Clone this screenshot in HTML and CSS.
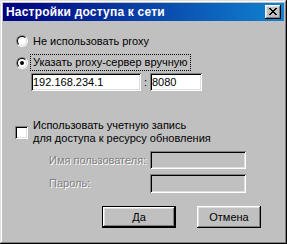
FILE: index.html
```html
<!DOCTYPE html>
<html lang="ru">
<head>
<meta charset="utf-8">
<title>Настройки доступа к сети</title>
<link rel="stylesheet" href="styles.css">
</head>
<body>
<div class="window">
  <div class="titlebar">
    <span class="title">Настройки доступа к сети</span>
    <button class="close" aria-label="Закрыть">
      <svg width="8" height="7" viewBox="0 0 8 7" shape-rendering="crispEdges">
        <path d="M0 0h2v1h-2zM6 0h2v1h-2zM1 1h2v1h-2zM5 1h2v1h-2zM2 2h4v1h-4zM3 3h2v1h-2zM2 4h4v1h-4zM1 5h2v1h-2zM5 5h2v1h-2zM0 6h2v1h-2zM6 6h2v1h-2z" fill="#000"/>
      </svg>
    </button>
  </div>
  <div class="content">
    <div class="row row-radio1">
      <span class="radio"></span>
      <span class="label">Не использовать proxy</span>
    </div>
    <div class="row row-radio2">
      <span class="radio checked"></span>
      <span class="label focus">Указать proxy-сервер вручную</span>
    </div>
    <div class="row row-addr">
      <div class="field field-ip">192.168.234.1</div>
      <span class="colon">:</span>
      <div class="field field-port">8080</div>
    </div>
    <div class="row row-check">
      <span class="checkbox"></span>
      <span class="label two-line">Использовать учетную запись<br>для доступа к ресурсу обновления</span>
    </div>
    <div class="row row-user">
      <span class="label disabled cred-label">Имя пользователя:</span>
      <div class="field field-cred"></div>
    </div>
    <div class="row row-pass">
      <span class="label disabled cred-label">Пароль:</span>
      <div class="field field-cred field-pass"></div>
    </div>
    <div class="row row-buttons">
      <button class="btn btn-default">Да</button>
      <button class="btn btn-cancel">Отмена</button>
    </div>
  </div>
</div>
</body>
</html>
```
FILE: styles.css
```css
html, body {
  margin: 0;
  padding: 0;
  background: #c0c0c0;
}

.window {
  width: 287px;
  height: 244px;
  box-sizing: border-box;
  padding: 3px;
  background: #c0c0c0;
  box-shadow: inset -1px -1px #000, inset 1px 1px #dfdfdf, inset -2px -2px #808080, inset 2px 2px #fff;
  font-family: "Liberation Sans", Arial, sans-serif;
  font-size: 11px;
  color: #000;
  display: flex;
  flex-direction: column;
}

.titlebar {
  height: 18px;
  flex: none;
  display: flex;
  align-items: center;
  justify-content: space-between;
  padding: 0 3px 0 3px;
  background: linear-gradient(to right, #000080, #1084d0);
}

.title {
  color: #fff;
  font-weight: bold;
  font-size: 12px;
  letter-spacing: 0.2px;
  line-height: 18px;
  white-space: nowrap;
}

.close {
  width: 16px;
  height: 14px;
  padding: 0;
  margin: 0;
  border: 0;
  background: #c0c0c0;
  box-shadow: inset -1px -1px #000, inset 1px 1px #fff, inset -2px -2px #808080, inset 2px 2px #dfdfdf;
  display: flex;
  align-items: center;
  justify-content: center;
}

.close svg {
  display: block;
  margin: -1px 0 0 -1px;
}

.content {
  display: flex;
  flex-direction: column;
  padding-left: 12px;
}

.row {
  display: flex;
  align-items: center;
}

.label {
  line-height: 13px;
  white-space: nowrap;
}

.row-radio1 {
  margin-top: 14px;
  height: 12px;
  padding-left: 1px;
}

.row-radio1 .label {
  margin-left: 5px;
}

.row-radio2 {
  margin-top: 7px;
  height: 17px;
  padding-left: 1px;
}

.radio {
  width: 12px;
  height: 12px;
  box-sizing: border-box;
  border-radius: 50%;
  border: 1px solid;
  border-color: #808080 #fff #fff #808080;
  flex: none;
  position: relative;
}

.radio::after {
  content: "";
  position: absolute;
  inset: 0;
  box-sizing: border-box;
  border-radius: 50%;
  border: 1px solid;
  border-color: #000 #dfdfdf #dfdfdf #000;
  background: #fff;
}

.radio.checked::before {
  content: "";
  position: absolute;
  width: 4px;
  height: 4px;
  left: 3px;
  top: 3px;
  border-radius: 50%;
  background: #000;
  z-index: 1;
}

.focus {
  margin-left: 2px;
  padding: 1px 2px;
  border: 1px dotted #000;
}

.row-addr {
  margin-top: 2px;
  height: 18px;
  padding-left: 16px;
}

.field {
  height: 18px;
  box-sizing: border-box;
  background: #fff;
  box-shadow: inset 1px 1px #808080, inset -1px -1px #fff, inset 2px 2px #000, inset -2px -2px #dfdfdf;
  padding: 2px 3px 0 2px;
  line-height: 14px;
  white-space: nowrap;
}

.field-ip {
  width: 110px;
}

.colon {
  width: 9px;
  text-align: center;
  line-height: 13px;
}

.field-port {
  width: 52px;
}

.row-check {
  margin-top: 28px;
  height: 26px;
}

.checkbox {
  width: 13px;
  height: 13px;
  flex: none;
  background: #fff;
  box-shadow: inset 1px 1px #808080, inset -1px -1px #fff, inset 2px 2px #000, inset -2px -2px #dfdfdf;
}

.two-line {
  margin-left: 5px;
}

.row-user {
  margin-top: 6px;
  height: 18px;
  padding-left: 34px;
}

.row-pass {
  margin-top: 5px;
  height: 19px;
  padding-left: 34px;
}

.cred-label {
  width: 101px;
  flex: none;
}

.disabled {
  color: #808080;
  text-shadow: 1px 1px 0 #fff;
}

.field-cred {
  width: 96px;
  background: #c0c0c0;
}

.field-pass {
  height: 19px;
}

.row-buttons {
  margin-top: 13px;
  height: 22px;
  padding-left: 87px;
}

.btn {
  height: 22px;
  margin: 0;
  padding: 0;
  border: 0;
  box-sizing: border-box;
  background: #c0c0c0;
  font-family: "Liberation Sans", Arial, sans-serif;
  font-size: 11px;
  color: #000;
  box-shadow: inset -1px -1px #000, inset 1px 1px #fff, inset -2px -2px #808080, inset 2px 2px #dfdfdf;
}

.btn-default {
  width: 74px;
  border: 1px solid #000;
}

.btn-cancel {
  width: 64px;
  margin-left: 21px;
}
```
